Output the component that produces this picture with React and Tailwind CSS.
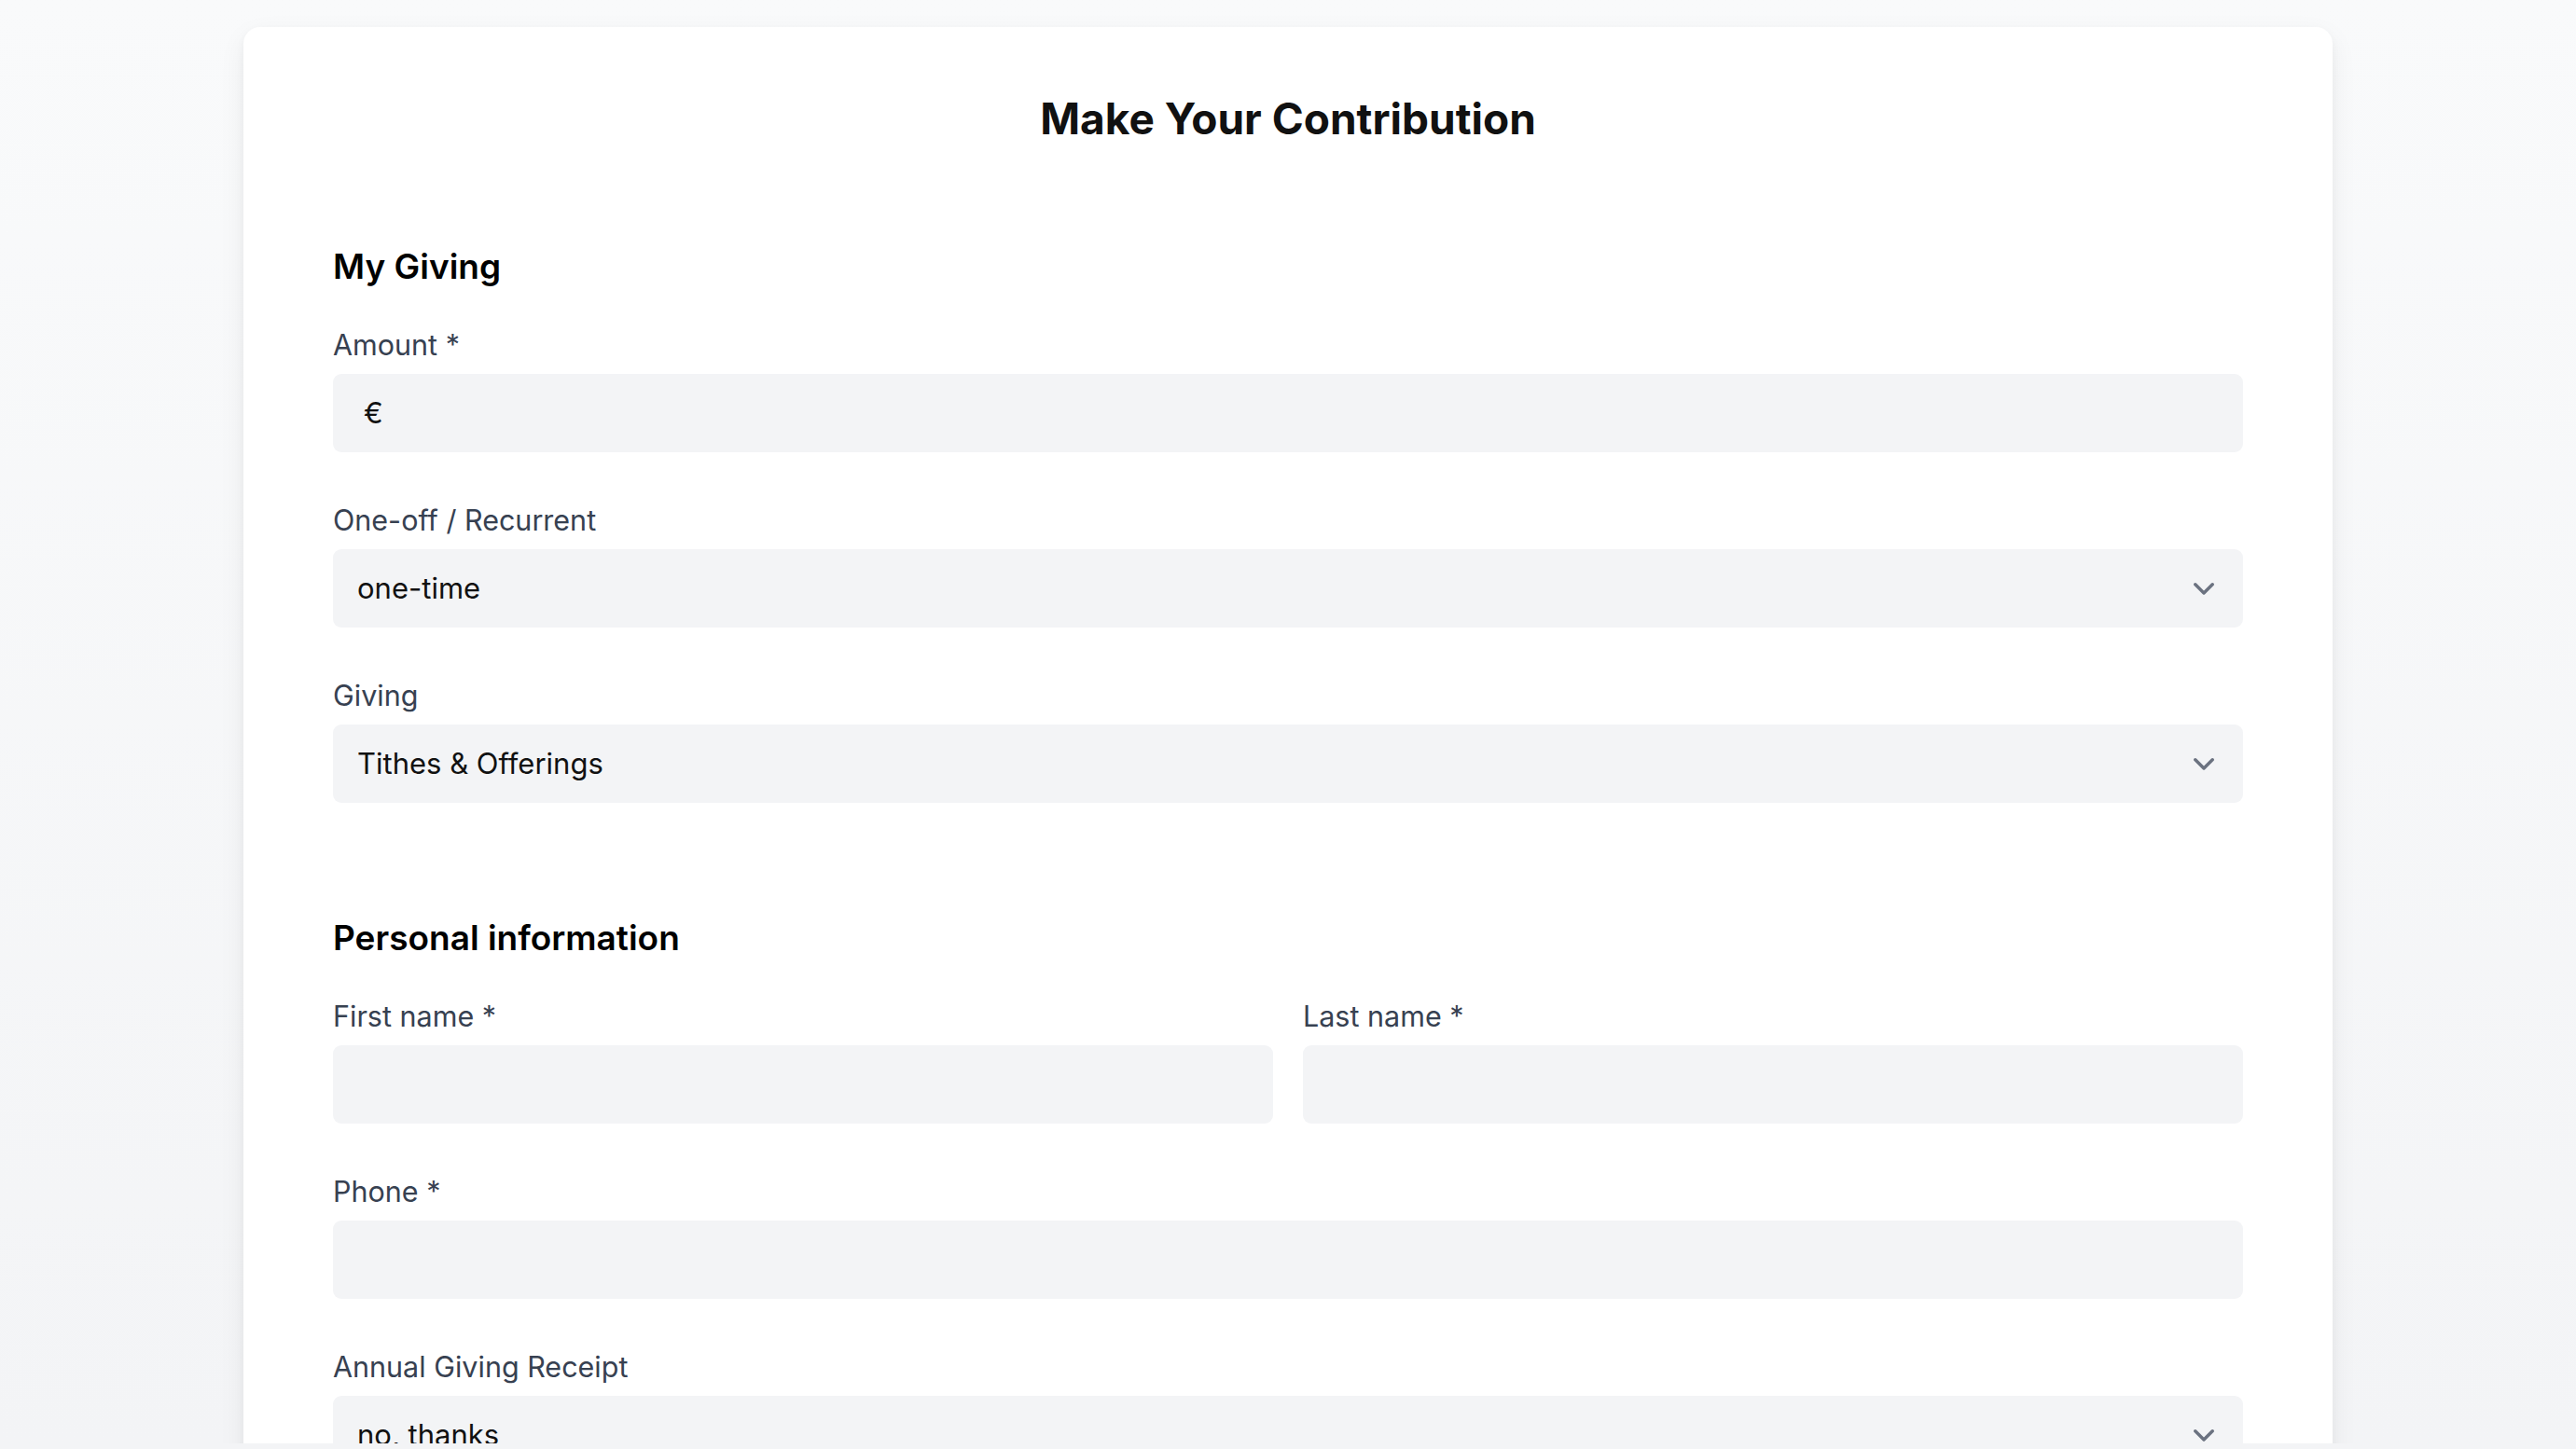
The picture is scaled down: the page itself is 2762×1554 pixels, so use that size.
import React from "react";

function Chevron() {
  return (
    <svg width="22" height="13" viewBox="0 0 22 13" fill="none" aria-hidden="true">
      <path d="M1.8 1.8 L11 11 L20.2 1.8" stroke="#6b7280" strokeWidth="3.4" strokeLinecap="round" strokeLinejoin="round" />
    </svg>
  );
}

function Label({ children }) {
  return (
    <label className="block text-[30.5px] leading-[45px] text-[#374151] mb-[9px]">{children}</label>
  );
}

function TextBox({ prefix }) {
  return (
    <div className="h-[84px] rounded-[9px] bg-[#f3f4f6] flex items-center pl-[33px]">
      {prefix ? <span className="text-[31px] text-[#111]">{prefix}</span> : null}
    </div>
  );
}

function SelectBox({ value }) {
  return (
    <div className="h-[84px] rounded-[9px] bg-[#f3f4f6] flex items-center justify-between pl-[26px] pr-[31px]">
      <span className="text-[31px] text-[#111]">{value}</span>
      <Chevron />
    </div>
  );
}

function Field({ label, first, children }) {
  return (
    <div className={first ? "mt-[38px]" : "mt-[50px]"}>
      <Label>{label}</Label>
      {children}
    </div>
  );
}

export default function App() {
  return (
    <div className="h-[1554px] overflow-hidden bg-linear-to-b from-[#f9fafb] to-[#f3f4f6] font-['Inter','Liberation_Sans',sans-serif]">
      <div className="h-[1548px] overflow-hidden pt-[29px]">
        <div className="mx-auto w-[2240px] rounded-[18px] bg-white shadow-[0_10px_30px_rgba(0,0,0,0.06),0_4px_10px_rgba(0,0,0,0.04)] px-[96px] pt-[70px] pb-[96px]">
          <h1 className="text-center text-[46px] leading-[56px] font-bold text-[#111]">Make Your Contribution</h1>

          <section className="mt-[108px]">
            <h2 className="text-[37px] leading-[46px] font-semibold text-black">My Giving</h2>
            <Field label="Amount *" first>
              <TextBox prefix="€" />
            </Field>
            <Field label="One-off / Recurrent">
              <SelectBox value="one-time" />
            </Field>
            <Field label="Giving">
              <SelectBox value="Tithes & Offerings" />
            </Field>
          </section>

          <section className="mt-[122px]">
            <h2 className="text-[37px] leading-[46px] font-semibold text-black">Personal information</h2>
            <div className="grid grid-cols-2 gap-x-[32px]">
              <Field label="First name *" first>
                <TextBox />
              </Field>
              <Field label="Last name *" first>
                <TextBox />
              </Field>
            </div>
            <Field label="Phone *">
              <TextBox />
            </Field>
            <Field label="Annual Giving Receipt">
              <SelectBox value="no, thanks" />
            </Field>
            <Field label="Email *">
              <TextBox />
            </Field>
          </section>
        </div>
      </div>
      <div className="h-[6px] bg-[#f3f4f6]" />
    </div>
  );
}
